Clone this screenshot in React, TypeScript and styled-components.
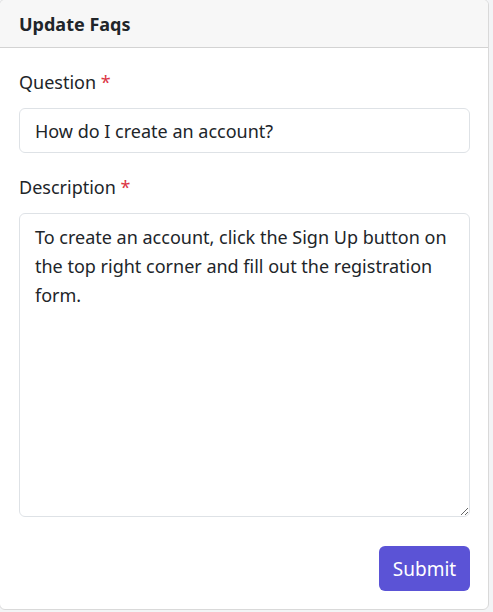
import styled, { createGlobalStyle } from "styled-components";

const GlobalStyle = createGlobalStyle`
  html, body {
    margin: 0;
    padding: 0;
    background: #f3f4f6;
  }
  body {
    font-family: "Noto Sans", "Open Sans", sans-serif;
    color: #212529;
  }
`;

const Card = styled.div`
  width: 490px;
  height: 611px;
  margin: -1px 0 0 -1px;
  box-sizing: border-box;
  background: #fff;
  border: 1px solid #d9d9d9;
  border-radius: 6px;
  display: flex;
  flex-direction: column;
  overflow: hidden;
`;

const CardHeader = styled.div`
  height: 48px;
  box-sizing: border-box;
  padding: 0 19px;
  display: flex;
  align-items: center;
  background: #f7f7f7;
  border-bottom: 1px solid #d3d3d3;
  font-size: 18px;
  font-weight: 700;
  color: #212529;
`;

const Form = styled.form`
  flex: 1;
  display: flex;
  flex-direction: column;
  padding: 21px 18px 0 19px;
`;

const Label = styled.label`
  font-size: 18px;
  line-height: 27px;
  color: #212529;
  margin-bottom: 12px;
`;

const Required = styled.span`
  color: #dc3545;
`;

const fieldStyles = `
  width: 100%;
  box-sizing: border-box;
  border: 1px solid #dee2e6;
  border-radius: 6px;
  font-family: "Noto Sans", "Open Sans", sans-serif;
  font-size: 18px;
  color: #212529;
  background: #fff;
  padding: 0 15px;
  outline: none;
`;

const TextInput = styled.input`
  ${fieldStyles}
  height: 45px;
  margin-bottom: 21px;
`;

const TextArea = styled.textarea`
  ${fieldStyles}
  height: 304px;
  padding: 9px 15px;
  line-height: 29px;
  resize: vertical;
  margin-bottom: 29px;
`;

const Actions = styled.div`
  display: flex;
  justify-content: flex-end;
`;

const SubmitButton = styled.button`
  width: 91px;
  height: 45px;
  border: none;
  border-radius: 6px;
  background: #5b53d6;
  color: #fff;
  font-family: "Noto Sans", "Open Sans", sans-serif;
  font-size: 19px;
  cursor: pointer;
`;

export default function App() {
  return (
    <>
      <GlobalStyle />
      <Card>
        <CardHeader>Update Faqs</CardHeader>
        <Form onSubmit={(e) => e.preventDefault()}>
          <Label>
            Question <Required>*</Required>
          </Label>
          <TextInput defaultValue="How do I create an account?" />
          <Label>
            Description <Required>*</Required>
          </Label>
          <TextArea defaultValue="To create an account, click the Sign Up button on the top right corner and fill out the registration form." />
          <Actions>
            <SubmitButton type="submit">Submit</SubmitButton>
          </Actions>
        </Form>
      </Card>
    </>
  );
}
